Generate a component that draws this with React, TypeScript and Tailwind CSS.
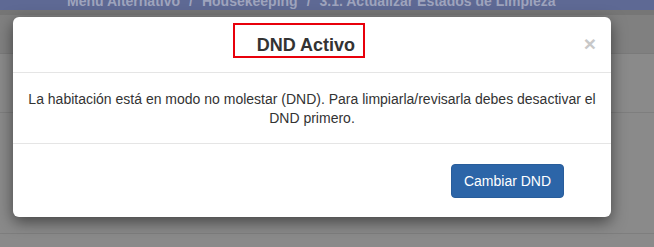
export default function App() {
  return (
    <div className="relative w-[654px] h-[247px] overflow-hidden bg-[#8a8a8a] font-['Liberation_Sans',Arial,sans-serif]">
      {/* page behind the backdrop */}
      <div className="h-[10px] bg-[#5e6994] relative overflow-hidden">
        <div className="absolute left-[67px] top-[-9px] flex gap-[9px] text-[14px] font-bold text-[#9ea4bd] whitespace-nowrap">
          <span>Menú Alternativo</span>
          <span>/</span>
          <span>Housekeeping</span>
          <span>/</span>
          <span>3.1. Actualizar Estados de Limpieza</span>
        </div>
      </div>
      <div className="h-[5px] bg-[#767676]" />
      <div className="h-[39px] bg-[#808080] border-b border-[#7a7a7a]" />
      <div className="h-[59px] border-b border-[#7e7e7e]" />
      <div className="h-[121px] border-b border-[#7e7e7e]" />

      {/* modal */}
      <div className="absolute left-[13px] top-[17px] w-[598px] h-[200px] bg-white rounded-[6px] shadow-[0_5px_15px_rgba(0,0,0,0.5)] flex flex-col">
        <div className="relative h-[56px] border-b border-[#e5e5e5] px-[15px] flex items-center">
          <h4 className="flex-1 text-center text-[18px] font-bold text-[#333] leading-none">DND Activo</h4>
          <button className="text-[21px] font-bold text-[#c8c8c8] leading-none pb-[2px]">×</button>
          <div className="absolute left-[220px] top-[6px] w-[132px] h-[35px] border-2 border-[#e8000b]" />
        </div>
        <div className="h-[71px] border-b border-[#e5e5e5] px-[15px] pt-[1px] flex items-center justify-center">
          <p className="text-center text-[14px] leading-[19px] text-[#333]">
            La habitación está en modo no molestar (DND). Para limpiarla/revisarla debes desactivar el DND primero.
          </p>
        </div>
        <div className="flex-1 flex justify-end items-start pt-[20px] pr-[47px]">
          <button className="w-[113px] h-[34px] rounded-[4px] bg-[#2c65a8] border border-[#285d9b] text-white text-[14px]">
            Cambiar DND
          </button>
        </div>
      </div>
    </div>
  );
}
